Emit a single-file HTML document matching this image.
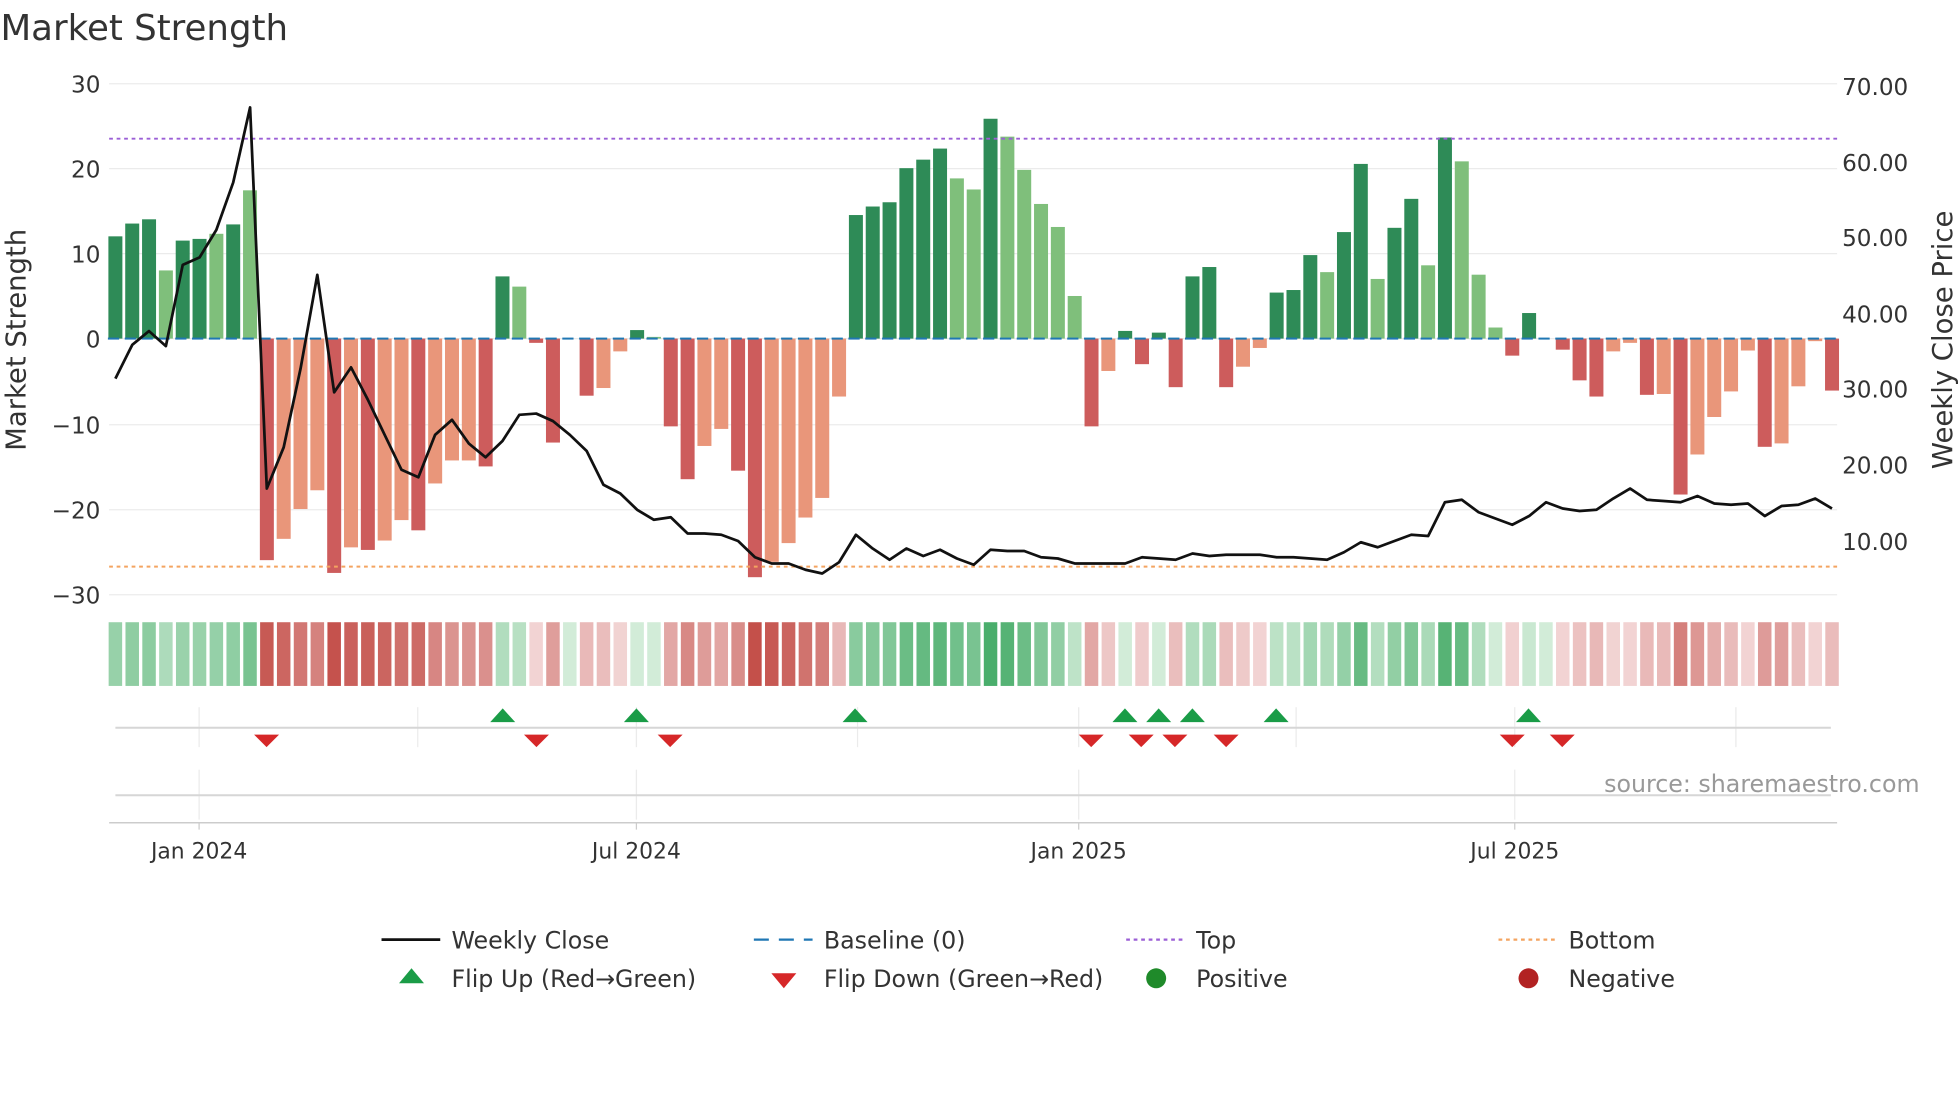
<!DOCTYPE html>
<html><head><meta charset="utf-8"><style>
html,body{margin:0;padding:0;background:#fff;width:1960px;height:1102px;overflow:hidden}
svg{display:block}
text{font-family:"DejaVu Sans","Liberation Sans",sans-serif;fill:#333}
</style></head><body>
<svg id="s" width="1960" height="1102" viewBox="0 0 1568 882" xmlns="http://www.w3.org/2000/svg">
<rect width="1568" height="882" fill="#fff"/>
<g id="grid" stroke="#ebebeb" stroke-width="1"></g>
<g id="bars"></g>
<line x1="87" y1="111" x2="1470" y2="111" stroke="#9b5fd6" stroke-width="1.6" stroke-dasharray="3,3"/>
<line x1="87" y1="453.5" x2="1470" y2="453.5" stroke="#f4a460" stroke-width="1.6" stroke-dasharray="3,3"/>
<g id="base"></g>
<polyline id="line" fill="none" stroke="#111" stroke-width="2.2" stroke-linejoin="round"/>
<g id="heat"></g>
<g id="mk"></g>
<text x="0" y="32" font-size="28.5">Market Strength</text>
<g font-size="18.5" text-anchor="end">
<text x="80" y="74">30</text><text x="80" y="142">20</text><text x="80" y="210">10</text>
<text x="80" y="278">0</text><text x="80" y="347">−10</text><text x="80" y="415">−20</text><text x="80" y="483">−30</text>
</g>
<g font-size="18.5">
<text x="1474" y="76">70.00</text><text x="1474" y="137">60.00</text><text x="1474" y="197">50.00</text>
<text x="1474" y="258">40.00</text><text x="1474" y="318">30.00</text><text x="1474" y="379">20.00</text><text x="1474" y="440">10.00</text>
</g>
<text transform="translate(20,272) rotate(-90)" font-size="22" text-anchor="middle">Market Strength</text>
<text transform="translate(1562,272) rotate(-90)" font-size="22" text-anchor="middle">Weekly Close Price</text>
<text x="1536" y="634" font-size="19" text-anchor="end" style="fill:#999">source: sharemaestro.com</text>
<line x1="87" y1="658.5" x2="1470" y2="658.5" stroke="#ccc" stroke-width="1.2"/>
<g stroke="#ccc"><line x1="159" y1="658" x2="159" y2="664"/><line x1="509" y1="658" x2="509" y2="664"/><line x1="863" y1="658" x2="863" y2="664"/><line x1="1212" y1="658" x2="1212" y2="664"/></g>
<g font-size="17.5" text-anchor="middle">
<text x="159" y="687">Jan 2024</text><text x="509" y="687">Jul 2024</text><text x="863" y="687">Jan 2025</text><text x="1212" y="687">Jul 2025</text>
</g>
<g font-size="19">
<line x1="305" y1="752" x2="352" y2="752" stroke="#111" stroke-width="2.2"/><text x="361" y="759">Weekly Close</text>
<line x1="603" y1="752" x2="650" y2="752" stroke="#1f77b4" stroke-width="1.8" stroke-dasharray="12,8"/><text x="659" y="759">Baseline (0)</text>
<line x1="901" y1="752" x2="948" y2="752" stroke="#9b5fd6" stroke-width="1.8" stroke-dasharray="3,3"/><text x="957" y="759">Top</text>
<line x1="1199" y1="752" x2="1246" y2="752" stroke="#f4a460" stroke-width="1.8" stroke-dasharray="3,3"/><text x="1255" y="759">Bottom</text>
<polygon points="319,787 329,775 339,787" fill="#1a9c47"/><text x="361" y="790">Flip Up (Red→Green)</text>
<polygon points="617,779 637,779 627,791" fill="#d62728"/><text x="659" y="790">Flip Down (Green→Red)</text>
<circle cx="925" cy="783" r="8" fill="#1f8a2a"/><text x="957" y="790">Positive</text>
<circle cx="1223" cy="783" r="8" fill="#b22222"/><text x="1255" y="790">Negative</text>
</g>
</svg>
<script>
var NS="http://www.w3.org/2000/svg";
function el(p,t,a){var e=document.createElementNS(NS,t);for(var k in a)e.setAttribute(k,a[k]);document.getElementById(p).appendChild(e);return e;}
[67,135,203,271,340,408,476].forEach(function(y){el("grid","line",{x1:87,x2:1470,y1:y,y2:y});});
[159,334,509,686,863,1037,1212,1389].forEach(function(x){el("grid","line",{x1:x,x2:x,y1:566,y2:598});});
[159,509,863,1212].forEach(function(x){el("grid","line",{x1:x,x2:x,y1:616,y2:656});});
el("grid","line",{x1:92,x2:1465,y1:582.5,y2:582.5,stroke:"#d6d6d6","stroke-width":1.6});
el("grid","line",{x1:92,x2:1465,y1:636.5,y2:636.5,stroke:"#d6d6d6","stroke-width":1.6});
var B=[[12,1],[13.5,1],[14,1],[8,0],[11.5,1],[11.7,1],[12.3,0],[13.4,1],[17.4,0],[-26,1],[-23.5,0],[-20,0],[-17.8,0],[-27.5,1],[-24.5,0],[-24.8,1],[-23.7,0],[-21.3,0],[-22.5,1],[-17,0],[-14.3,0],[-14.3,0],[-15,1],[7.3,1],[6.1,0],[-0.5,1],[-12.2,1],[0,1],[-6.7,1],[-5.8,0],[-1.5,0],[1,1],[0.2,0],[-10.3,1],[-16.5,1],[-12.6,0],[-10.6,0],[-15.5,1],[-28,1],[-26.2,0],[-24,0],[-21,0],[-18.7,0],[-6.8,0],[14.5,1],[15.5,1],[16,1],[20,1],[21,1],[22.3,1],[18.8,0],[17.5,0],[25.8,1],[23.7,0],[19.8,0],[15.8,0],[13.1,0],[5,0],[-10.3,1],[-3.8,0],[0.9,1],[-3,1],[0.7,1],[-5.7,1],[7.3,1],[8.4,1],[-5.7,1],[-3.3,0],[-1.1,0],[5.4,1],[5.7,1],[9.8,1],[7.8,0],[12.5,1],[20.5,1],[7,0],[13,1],[16.4,1],[8.6,0],[23.6,1],[20.8,0],[7.5,0],[1.3,0],[-2,1],[3,1],[0,1],[-1.3,1],[-4.9,1],[-6.8,1],[-1.5,0],[-0.5,0],[-6.6,1],[-6.5,0],[-18.3,1],[-13.6,0],[-9.2,0],[-6.2,0],[-1.4,0],[-12.7,1],[-12.3,0],[-5.6,0],[-0.3,0],[-6.1,1]];
var S=6.82,Z=271;
function mix(a,b,t){var r=[];for(var i=0;i<3;i++)r.push(Math.round(a[i]+(b[i]-a[i])*t));return "rgb("+r.join(",")+")";}
B.forEach(function(b,i){
 var x=92+13.47*i,v=b[0],h=Math.abs(v)*S,c;
 if(v>=0)c=b[1]?"#2e8b57":"#7fbf7b";else c=b[1]?"#cd5c5c":"#e9967a";
 if(h>0.3)el("bars","rect",{x:x-5.6,y:v>=0?Z-h:Z,width:11.2,height:h,fill:c});
 var t=Math.min(Math.abs(v)/28,1);
 var hc=v>=0?mix([218,240,222],[62,168,98],Math.max(t,0.05)):mix([244,218,218],[196,80,74],Math.max(t,0.05));
 el("heat","rect",{x:x-5.4,y:498,width:10.8,height:51,fill:hc});
 el("base","line",{x1:x-6,x2:x+5,y1:Z,y2:Z,stroke:"#1f77b4","stroke-width":1.6,"stroke-dasharray":"9,4"});
});
var L=[303,276,265,277,212,206,184,146,86,391,358,295,220,314,294,320,348,376,382,348,336,355,366,353,332,331,337,348,361,388,395,408,416,414,427,427,428,433,446,451,451,456,459,450,428,439,448,439,445,440,447,452,440,441,441,446,447,451,451,451,451,446,447,448,443,445,444,444,444,446,446,447,448,442,434,438,433,428,429,402,400,410,415,420,413,402,407,409,408,399,391,400,401,402,397,403,404,403,413,405,404,399,407];
document.getElementById("line").setAttribute("points",L.map(function(y,i){return (92+13.47*i).toFixed(1)+","+y;}).join(" "));
[402,509,684,900,927,954,1021,1223].forEach(function(x){el("mk","polygon",{points:(x-10)+",578 "+x+",567 "+(x+10)+",578",fill:"#1a9c47"});});
[213,429,536,873,913,940,981,1210,1250].forEach(function(x){el("mk","polygon",{points:(x-10)+",588 "+(x+10)+",588 "+x+",598",fill:"#d62728"});});
</script>
</body></html>
